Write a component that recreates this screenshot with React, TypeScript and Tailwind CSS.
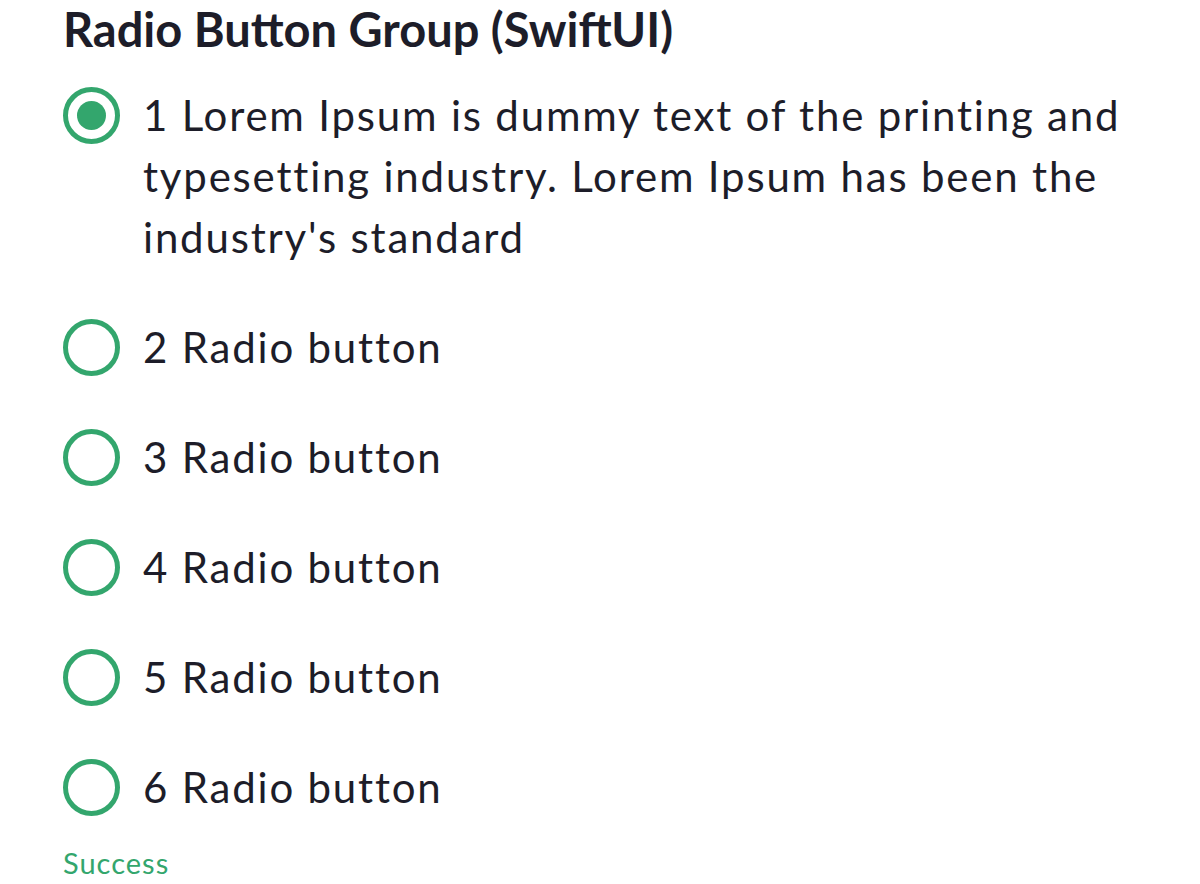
import React, { useState } from 'react';

const options = [
  "1 Lorem Ipsum is dummy text of the printing and typesetting industry. Lorem Ipsum has been the industry's standard",
  '2 Radio button',
  '3 Radio button',
  '4 Radio button',
  '5 Radio button',
  '6 Radio button',
];

function Radio({ checked }: { checked: boolean }) {
  return (
    <span className="w-[57px] h-[57px] shrink-0 rounded-full border-[5px] border-[#33a66d] flex items-center justify-center mt-[2px]">
      {checked && <span className="w-[29px] h-[29px] rounded-full bg-[#33a66d]" />}
    </span>
  );
}

export default function App() {
  const [selected, setSelected] = useState(0);

  return (
    <div
      className="min-h-screen bg-white text-[#1d1d29] pl-[63px] pr-[30px] pt-[1px]"
      style={{ fontFamily: 'Lato, "Noto Sans", sans-serif' }}
    >
      <h1 className="text-[47px] font-bold leading-[56px]">Radio Button Group (SwiftUI)</h1>

      <div className="flex flex-col gap-[49px] mt-[28px]">
        {options.map((label, i) => (
          <button
            key={i}
            onClick={() => setSelected(i)}
            className="flex items-start gap-[23px] text-left"
          >
            <Radio checked={selected === i} />
            <span className="text-[42px] leading-[61px] tracking-[1.8px] max-w-[1000px]">{label}</span>
          </button>
        ))}
      </div>

      <p className="text-[29px] leading-[42px] tracking-[1px] text-[#33a66d] mt-[24px]">Success</p>
    </div>
  );
}
